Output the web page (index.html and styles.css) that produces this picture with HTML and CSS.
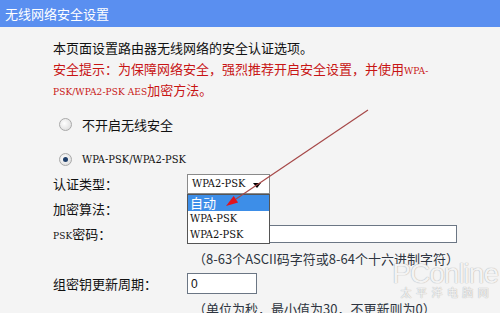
FILE: index.html
```html
<!DOCTYPE html>
<html lang="zh-CN">
<head>
    <meta charset="UTF-8">
    <title>无线网络安全设置</title>
    <link rel="stylesheet" href="styles.css">
</head>
<body>
    <div class="header">无线网络安全设置</div>

    <div class="content">
        <div class="intro">
            <div class="line">本页面设置路由器无线网络的安全认证选项。</div>
            <div class="line warn">安全提示：为保障网络安全，强烈推荐开启安全设置，并使用<span class="en">WPA-</span></div>
            <div class="line warn"><span class="en">PSK/WPA2-PSK AES</span>加密方法。</div>
        </div>

        <div class="radio-row first"><span class="radio"></span>不开启无线安全</div>
        <div class="radio-row second"><span class="radio checked"></span><span class="mono">WPA-PSK/WPA2-PSK</span></div>

        <div class="form">
            <div class="row">
                <div class="label">认证类型：</div>
                <div class="select-wrap">
                    <div class="select"><span class="mono">WPA2-PSK</span><span class="caret"></span></div>
                    <ul class="options">
                        <li class="active">自动</li>
                        <li class="mono">WPA-PSK</li>
                        <li class="mono">WPA2-PSK</li>
                    </ul>
                </div>
            </div>
            <div class="row">
                <div class="label">加密算法：</div>
            </div>
            <div class="row">
                <div class="label"><span class="en">PSK</span>密码：</div>
                <div class="input long"></div>
            </div>
            <div class="row hint">（8-63个ASCII码字符或8-64个十六进制字符）</div>
            <div class="row">
                <div class="label">组密钥更新周期：</div>
                <div class="input short">0</div>
            </div>
            <div class="row hint">（单位为秒，最小值为30，不更新则为0）</div>
        </div>
    </div>

    <!-- 标注箭头 -->
    <svg class="annot" width="500" height="313" viewBox="0 0 500 313">
        <line x1="368" y1="110" x2="236" y2="199" stroke="#a64848" stroke-width="1.2"/>
        <polygon points="226,206 238.1,202.6 233.7,196" fill="#e0141e"/>
    </svg>

    <div class="watermark">
        <div class="wm-logo">PConline</div>
        <div class="wm-sub">太 平 洋 电 脑 网</div>
    </div>
</body>
</html>
```

FILE: styles.css
```css
/* 基本样式 */
body {
    margin: 0;
    width: 500px;
    height: 313px;
    overflow: hidden;
    position: relative;
    background-color: #f4f4f4;
    font-family: "Noto Sans CJK SC", "Liberation Sans", sans-serif;
    font-size: 13px;
    color: #111;
}

.header {
    height: 27px;
    line-height: 27px;
    padding-left: 5px;
    background-color: #5a8ff0;
    color: #FFFFFF;
    font-size: 13px;
}

.content {
    padding: 10px 0 0 53px;
}

.line {
    height: 21px;
    line-height: 21px;
    white-space: nowrap;
}

.warn {
    color: #c81414;
}

/* 宋体风格的英文 */
.en {
    font-family: "DejaVu Serif", serif;
    font-stretch: condensed;
    font-size: 10px;
    letter-spacing: 0.1px;
}

.mono {
    font-family: "DejaVu Serif", serif;
    font-stretch: condensed;
    font-size: 11px;
    letter-spacing: 0;
}

/* 单选 */
.radio-row {
    display: flex;
    align-items: center;
    height: 20px;
    padding-left: 6px;
}

.radio-row.first {
    margin-top: 14px;
}

.radio-row.second {
    margin-top: 15px;
}

.radio {
    width: 11px;
    height: 11px;
    border-radius: 50%;
    border: 1px solid #a9a9a9;
    background: radial-gradient(circle at 40% 40%, #ffffff, #d6d6d6);
    margin-right: 10px;
    position: relative;
}

.radio.checked::after {
    content: "";
    position: absolute;
    left: 3px;
    top: 3px;
    width: 5px;
    height: 5px;
    border-radius: 50%;
    background: #1f3f6a;
}

/* 表单 */
.form {
    margin-top: 2px;
}

.row {
    display: flex;
    align-items: center;
    height: 25px;
}

.label {
    width: 134px;
    white-space: nowrap;
}

.hint {
    padding-left: 140px;
    color: #2e3440;
    white-space: nowrap;
}

.select-wrap {
    position: relative;
    z-index: 2;
}

.select {
    box-sizing: border-box;
    width: 83px;
    height: 20px;
    border: 1px solid #8a8a8a;
    background: #FFFFFF;
    display: flex;
    align-items: center;
    padding-left: 4px;
    position: relative;
}

.caret {
    position: absolute;
    right: 8px;
    top: 8px;
    border-left: 4px solid transparent;
    border-right: 4px solid transparent;
    border-top: 5px solid #000;
}

.options {
    position: absolute;
    top: 20px;
    left: 0;
    box-sizing: border-box;
    width: 83px;
    margin: 0;
    padding: 0;
    list-style: none;
    background: #FFFFFF;
    border: 1px solid #555;
}

.options li {
    height: 16px;
    line-height: 16px;
    padding-left: 2px;
}

.options li.active {
    background-color: #3d8ee8;
    color: #FFFFFF;
}

.input {
    box-sizing: border-box;
    background: #FFFFFF;
    border: 1px solid #6b7684;
    font-family: "Liberation Sans", sans-serif;
    font-size: 12px;
    padding-left: 3px;
    display: flex;
    align-items: center;
}

.input.long {
    width: 270px;
    height: 18px;
}

.input.short {
    width: 70px;
    height: 21px;
}

/* 标注 */
.annot {
    position: absolute;
    left: 0;
    top: 0;
    z-index: 3;
    pointer-events: none;
}

.watermark {
    position: absolute;
    right: 2px;
    top: 262px;
    text-align: center;
    color: rgba(255, 255, 255, 0.85);
    text-shadow: 0 0 1px #b5b5b5, 0 0 1px #b5b5b5;
}

.wm-logo {
    font-family: "Liberation Sans", sans-serif;
    font-size: 28px;
    line-height: 24px;
    letter-spacing: -1px;
}

.wm-sub {
    font-size: 11px;
    line-height: 12px;
    letter-spacing: 1px;
}
```
